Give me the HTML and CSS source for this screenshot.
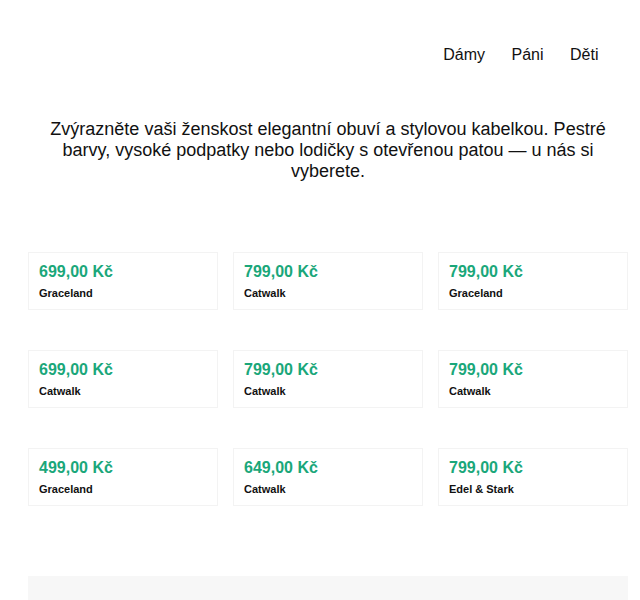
FILE: index.html
```html
<!DOCTYPE html>
<html lang="cs">
<head>
<meta charset="utf-8">
<title>Dámy</title>
<link rel="stylesheet" href="styles.css">
</head>
<body>
<div class="page">
  <header class="header">
    <nav class="nav">
      <a href="#">Dámy</a>
      <a href="#">Páni</a>
      <a href="#">Děti</a>
    </nav>
  </header>
  <p class="intro">Zvýrazněte vaši ženskost elegantní obuví a stylovou kabelkou. Pestré barvy, vysoké podpatky nebo lodičky s otevřenou patou — u nás si vyberete.</p>
  <section class="grid">
    <div class="card"><div class="price">699,00 Kč</div><div class="brand">Graceland</div></div>
    <div class="card"><div class="price">799,00 Kč</div><div class="brand">Catwalk</div></div>
    <div class="card"><div class="price">799,00 Kč</div><div class="brand">Graceland</div></div>
    <div class="card"><div class="price">699,00 Kč</div><div class="brand">Catwalk</div></div>
    <div class="card"><div class="price">799,00 Kč</div><div class="brand">Catwalk</div></div>
    <div class="card"><div class="price">799,00 Kč</div><div class="brand">Catwalk</div></div>
    <div class="card"><div class="price">499,00 Kč</div><div class="brand">Graceland</div></div>
    <div class="card"><div class="price">649,00 Kč</div><div class="brand">Catwalk</div></div>
    <div class="card"><div class="price">799,00 Kč</div><div class="brand">Edel &amp; Stark</div></div>
  </section>
  <footer class="footer"></footer>
</div>
</body>
</html>
```
FILE: styles.css
```css
html, body {
  margin: 0;
  padding: 0;
  background: #ffffff;
}
body {
  font-family: "Liberation Sans", Arial, sans-serif;
  color: #111111;
}
.page {
  width: 600px;
  margin-left: 28px;
}
.header {
  height: 109px;
  display: flex;
  justify-content: flex-end;
  align-items: flex-start;
  padding-top: 45px;
  box-sizing: border-box;
}
.nav {
  display: flex;
  gap: 26.5px;
  padding-right: 29.5px;
}
.nav a {
  color: #111111;
  text-decoration: none;
  font-size: 16px;
  line-height: 20px;
}
.intro {
  margin: 0;
  padding: 10px 0 0;
  text-align: center;
  font-size: 18px;
  line-height: 21px;
  height: 143px;
  box-sizing: border-box;
}
.grid {
  display: grid;
  grid-template-columns: repeat(3, 190px);
  column-gap: 15px;
  row-gap: 40px;
}
.card {
  height: 58px;
  box-sizing: border-box;
  border: 1px solid #f3f3f3;
  padding: 9px 10px 0;
}
.price {
  color: #1aa77a;
  font-weight: bold;
  font-size: 16px;
  line-height: 20px;
}
.brand {
  margin-top: 4px;
  font-weight: bold;
  font-size: 11px;
  line-height: 14px;
  color: #111111;
}
.footer {
  margin-top: 70px;
  height: 40px;
  background: #f7f7f7;
}
```
